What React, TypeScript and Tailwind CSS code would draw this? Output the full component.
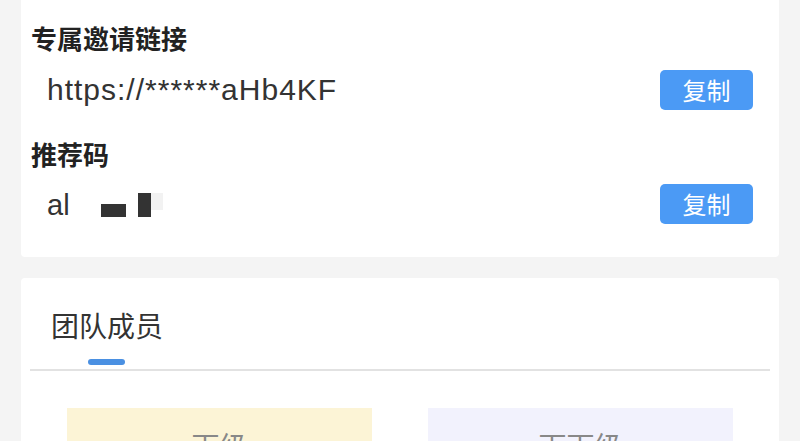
import React from "react";

const cjk = { fontFamily: '"Noto Sans CJK SC", "Noto Sans", sans-serif' };
const latin = { fontFamily: '"Liberation Sans", "Noto Sans CJK SC", sans-serif' };

function CopyButton() {
  return (
    <button
      className="w-[93px] h-[40px] rounded-[5px] bg-[#4b9af5] text-white text-[24px] leading-[40px] text-center"
      style={cjk}
    >
      复制
    </button>
  );
}

export default function App() {
  return (
    <div className="w-[800px] h-[441px] overflow-hidden bg-[#f4f4f4] px-[21px]">
      <div className="bg-white rounded-b-[4px] pl-[10px] pr-[26px] pt-[24px] pb-[33px]">
        <div className="text-[26px] leading-[27px] font-bold text-[#222]" style={cjk}>
          专属邀请链接
        </div>
        <div className="mt-[19px] h-[40px] flex items-center justify-between">
          <div className="pl-[16px] text-[30px] tracking-[1px] text-[#333] leading-none" style={latin}>
            https://******aHb4KF
          </div>
          <CopyButton />
        </div>
        <div className="mt-[30px] text-[26px] leading-[27px] font-bold text-[#222]" style={cjk}>
          推荐码
        </div>
        <div className="mt-[17px] h-[40px] flex items-center justify-between">
          <div className="pl-[16px] flex items-start h-[24px] mt-[2px]">
            <span className="text-[29px] leading-[24px] text-[#333] whitespace-nowrap" style={latin}>
              al
            </span>
            <span className="ml-[31px] mt-[11px] w-[25px] h-[13px] bg-[#333]"></span>
            <span className="ml-[12px] w-[13px] h-[24px] bg-[#333]"></span>
            <span className="w-[12px] h-[17px] bg-[#f2f2f2]"></span>
          </div>
          <CopyButton />
        </div>
      </div>

      <div className="mt-[21px] bg-white rounded-t-[4px] pt-[32px]">
        <div className="mx-[9px] border-b-2 border-[#e2e2e2] flex">
          <div className="pl-[21px] flex flex-col items-center">
            <div className="text-[28px] leading-[30px] text-[#333]" style={cjk}>
              团队成员
            </div>
            <div className="mt-[19px] mb-[4px] w-[37px] h-[6px] rounded-full bg-[#4a90e2] -translate-x-[1px]"></div>
          </div>
        </div>
        <div className="mt-[37px] flex justify-center gap-[56px]">
          <div className="w-[305px] h-[80px] bg-[#fcf4d6] flex justify-center pt-[22px]">
            <span className="text-[28px] leading-[30px] text-[#888]" style={cjk}>下级</span>
          </div>
          <div className="w-[305px] h-[80px] bg-[#f2f2fd] flex justify-center pt-[22px]">
            <span className="text-[28px] leading-[30px] text-[#888]" style={cjk}>下下级</span>
          </div>
        </div>
      </div>
    </div>
  );
}
